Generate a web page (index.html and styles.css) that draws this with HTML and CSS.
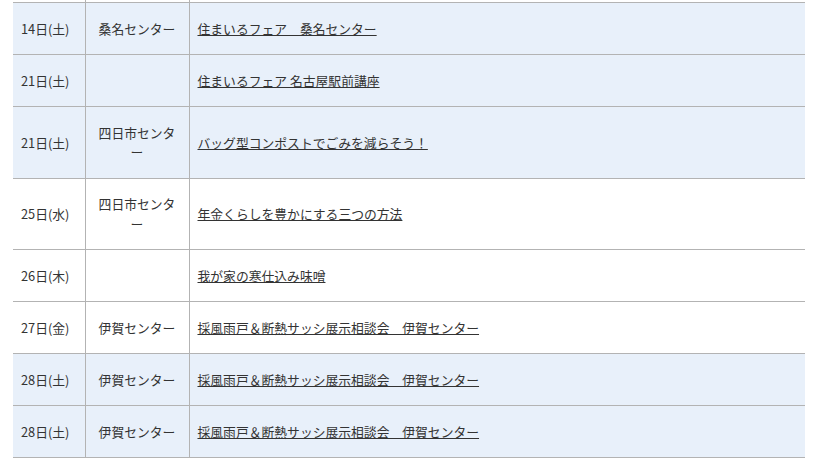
FILE: index.html
```html
<!DOCTYPE html>
<html lang="ja">
<head>
<meta charset="utf-8">
<title>イベント一覧</title>
<link rel="stylesheet" href="styles.css">
</head>
<body>
<div class="wrap">
<table class="events">
  <colgroup>
    <col class="c-date">
    <col class="c-place">
    <col class="c-title">
  </colgroup>
  <tbody>
    <tr class="cut"><td></td><td></td><td></td></tr>
    <tr class="alt"><td class="date">14日(土)</td><td class="place">桑名センター</td><td class="title"><a href="#">住まいるフェア　桑名センター</a></td></tr>
    <tr class="alt"><td class="date">21日(土)</td><td class="place"></td><td class="title"><a href="#">住まいるフェア 名古屋駅前講座</a></td></tr>
    <tr class="alt"><td class="date">21日(土)</td><td class="place">四日市センター</td><td class="title"><a href="#">バッグ型コンポストでごみを減らそう！</a></td></tr>
    <tr><td class="date">25日(水)</td><td class="place">四日市センター</td><td class="title"><a href="#">年金くらしを豊かにする三つの方法</a></td></tr>
    <tr><td class="date">26日(木)</td><td class="place"></td><td class="title"><a href="#">我が家の寒仕込み味噌</a></td></tr>
    <tr><td class="date">27日(金)</td><td class="place">伊賀センター</td><td class="title"><a href="#">採風雨戸＆断熱サッシ展示相談会　伊賀センター</a></td></tr>
    <tr class="alt"><td class="date">28日(土)</td><td class="place">伊賀センター</td><td class="title"><a href="#">採風雨戸＆断熱サッシ展示相談会　伊賀センター</a></td></tr>
    <tr class="alt"><td class="date">28日(土)</td><td class="place">伊賀センター</td><td class="title"><a href="#">採風雨戸＆断熱サッシ展示相談会　伊賀センター</a></td></tr>
  </tbody>
</table>
</div>
</body>
</html>
```

FILE: styles.css
```css
html, body {
  margin: 0;
  padding: 0;
  background: #ffffff;
}
body {
  font-family: "Noto Sans CJK JP", "Noto Sans", sans-serif;
  font-size: 12.8px;
  color: #333333;
}
.wrap {
  padding: 0 10px 0 13px;
}
.events {
  width: 100%;
  border-collapse: collapse;
  table-layout: fixed;
}
.c-date { width: 72px; }
.c-place { width: 104px; }
.events td {
  border-top: 1px solid #b3b3b3;
  border-bottom: 1px solid #b3b3b3;
  border-left: 1px solid #b3b3b3;
  padding: 15.75px 8px;
  line-height: 19.5px;
  vertical-align: middle;
}
.events td:first-child {
  border-left: none;
}
.events tr.cut td {
  padding: 0;
  height: 2px;
  line-height: 0;
  border-top: none;
}
.events tr.alt td {
  background: #e8f0fa;
}
.date {
  text-align: left;
}
.place {
  text-align: center;
}
.title a {
  color: #333333;
  text-decoration: underline;
}
```
